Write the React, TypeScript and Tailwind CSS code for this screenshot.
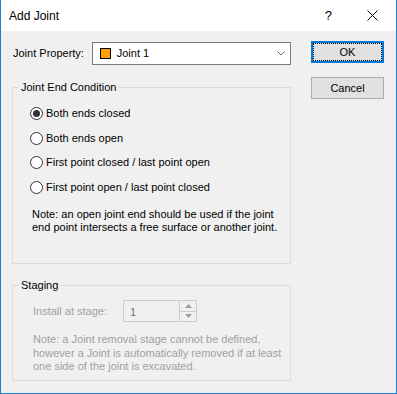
const options = [
  { label: "Both ends closed", checked: true, mt: "mt-0" },
  { label: "Both ends open", checked: false, mt: "mt-[9px]" },
  { label: "First point closed / last point open", checked: false, mt: "mt-[8px]" },
  { label: "First point open / last point closed", checked: false, mt: "mt-[9px]" },
];

function Radio({ checked }: { checked: boolean }) {
  return (
    <span className="flex h-[13px] w-[13px] items-center justify-center rounded-full border border-[#333333] bg-white">
      {checked && <span className="h-[7px] w-[7px] rounded-full bg-[#333333]" />}
    </span>
  );
}

export default function App() {
  return (
    <div
      className="flex h-[394px] w-[397px] flex-col border-x border-b border-[#1a7fd4] bg-[#f0f0f0] text-[11px] text-black"
      style={{ fontFamily: '"Liberation Sans", Arial, sans-serif' }}
    >
      {/* title bar */}
      <div className="flex h-[31px] items-center bg-white">
        <span className="ml-[8px] text-[12px]">Add Joint</span>
        <span className="ml-auto mr-[35px] text-[13px]">?</span>
        <svg width="11" height="11" viewBox="0 0 11 11" className="mr-[18px]">
          <path d="M0.5 0.5 L10.5 10.5 M10.5 0.5 L0.5 10.5" stroke="#000" strokeWidth="1" />
        </svg>
      </div>

      <div className="flex">
        {/* left column */}
        <div className="ml-[11px] w-[279px]">
          <div className="mt-[11px] flex h-[23px] items-center">
            <span className="w-[80px] pl-[1px]">Joint Property:</span>
            <div className="flex h-[23px] w-[200px] items-center border border-[#7a7a7a] bg-white">
              <span className="ml-[7px] h-[11px] w-[11px] border border-black bg-[#ff9f00]" />
              <span className="ml-[6px]">Joint 1</span>
              <svg width="8" height="5" viewBox="0 0 8 5" className="ml-auto mr-[5px]">
                <path d="M0.5 0.5 L4 4 L7.5 0.5" fill="none" stroke="#606060" strokeWidth="1" />
              </svg>
            </div>
          </div>

          <fieldset className="mt-[16px] h-[183px] border border-[#dcdcdc]">
            <legend className="ml-[6px] px-[2px] leading-[13px]">Joint End Condition</legend>
            <div className="pl-[17px] pt-[11px]">
              {options.map((o) => (
                <div key={o.label} className={`flex h-[16px] items-center gap-[3px] ${o.mt}`}>
                  <Radio checked={o.checked} />
                  <span>{o.label}</span>
                </div>
              ))}
              <p className="mt-[13px] pl-[2px] leading-[13px]">
                Note: an open joint end should be used if the joint
                <br />
                end point intersects a free surface or another joint.
              </p>
            </div>
          </fieldset>

          <fieldset className="mt-[15px] h-[102px] border border-[#dcdcdc] text-[#a0a0a0]">
            <legend className="ml-[6px] px-[2px] leading-[13px] text-black">Staging</legend>
            <div className="pl-[20px] pt-[8px]">
              <div className="flex h-[22px] items-center">
                <span className="w-[90px]">Install at stage:</span>
                <div className="flex h-[22px] w-[74px] border border-[#cccccc] bg-[#f0f0f0]">
                  <span className="ml-[6px] mt-[3px] flex-1 text-[#6d7080]">1</span>
                  <div className="flex w-[17px] flex-col border-l border-[#cccccc]">
                    <div className="flex flex-1 items-center justify-center border-b border-[#cccccc]">
                      <svg width="7" height="4" viewBox="0 0 7 4"><path d="M3.5 0 L7 4 L0 4 Z" fill="#a0a0a0" /></svg>
                    </div>
                    <div className="flex flex-1 items-center justify-center">
                      <svg width="7" height="4" viewBox="0 0 7 4"><path d="M0 0 L7 0 L3.5 4 Z" fill="#a0a0a0" /></svg>
                    </div>
                  </div>
                </div>
              </div>
              <p className="mt-[11px] leading-[13.5px]">
                Note: a Joint removal stage cannot be defined,
                <br />
                however a Joint is automatically removed if at least
                <br />
                one side of the joint is excavated.
              </p>
            </div>
          </fieldset>
        </div>

        {/* right column */}
        <div className="ml-[20px] flex flex-col">
          <button className="mt-[10px] flex h-[22px] w-[73px] items-center justify-center border-2 border-[#0078d7] bg-[#e1e1e1]">
            <span className="flex h-full w-full items-center justify-center border border-dotted border-black">OK</span>
          </button>
          <button className="mt-[14px] h-[22px] w-[73px] border border-[#adadad] bg-[#e1e1e1]">Cancel</button>
        </div>
      </div>
    </div>
  );
}
